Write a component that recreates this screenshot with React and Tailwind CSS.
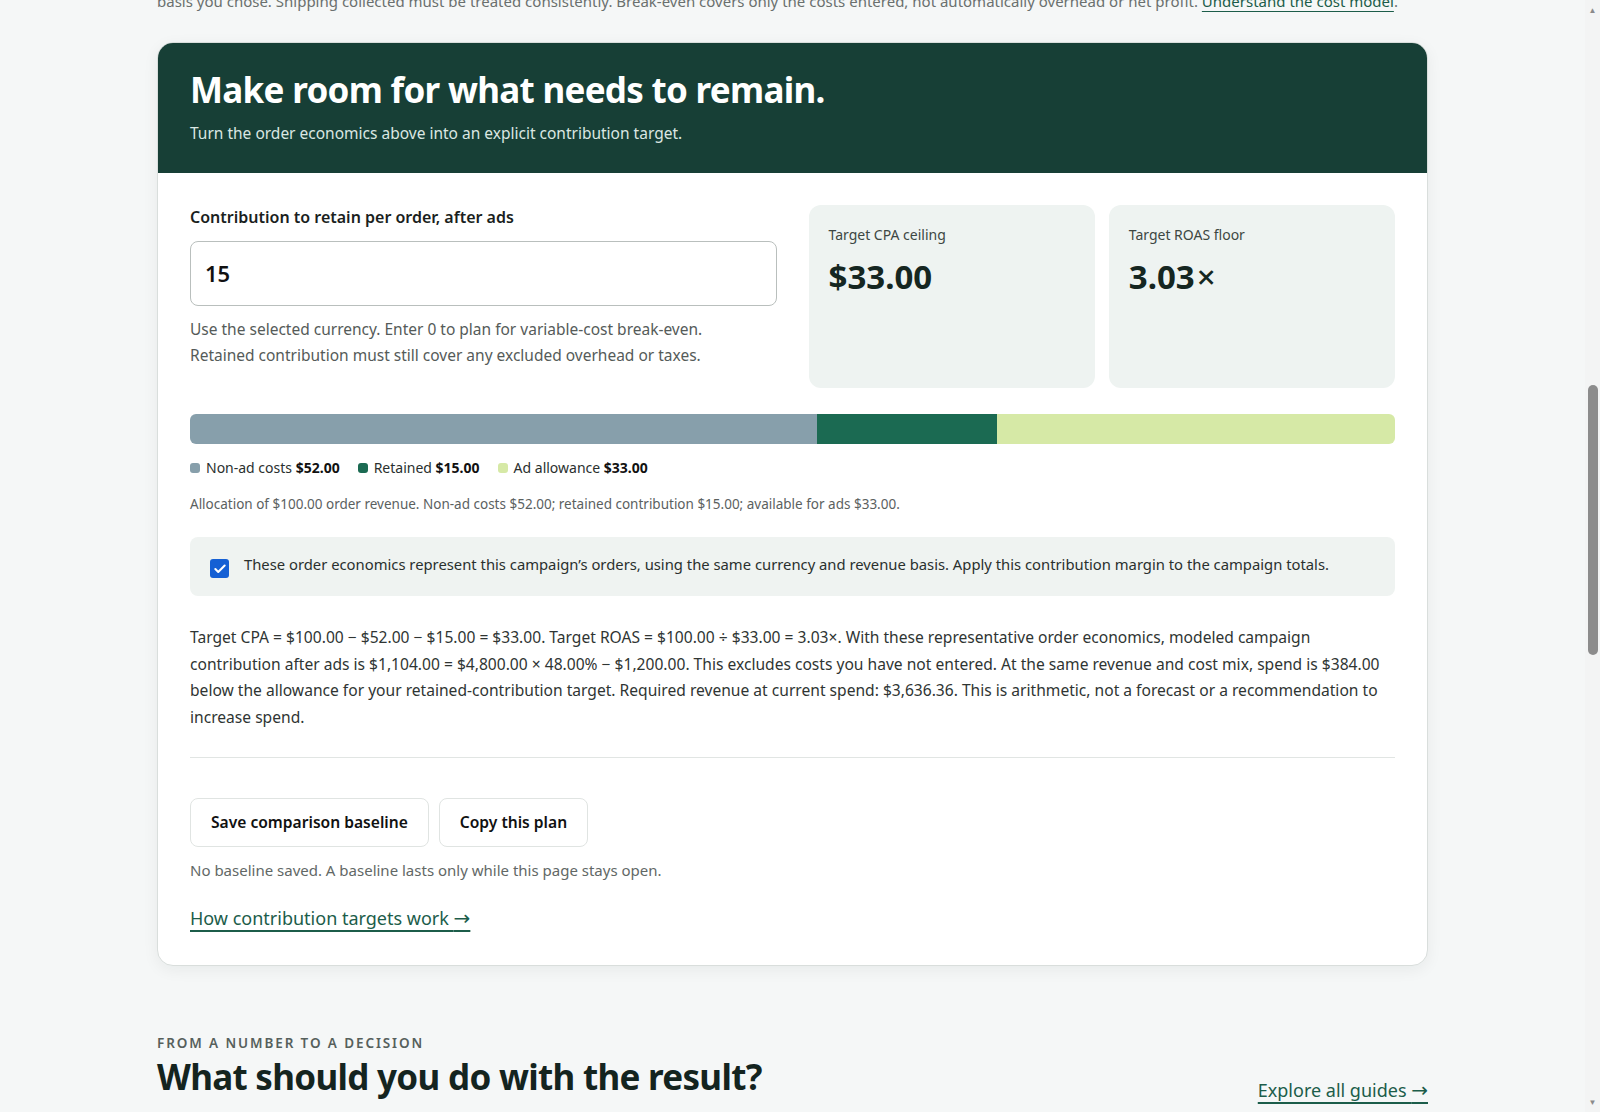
import React from 'react';
import { Check } from 'lucide-react';

const font = { fontFamily: '"Noto Sans", "Open Sans", sans-serif' };

const legend = [
  { label: 'Non-ad costs', value: '$52.00', color: 'bg-[#879fab]' },
  { label: 'Retained', value: '$15.00', color: 'bg-[#1b6a52]' },
  { label: 'Ad allowance', value: '$33.00', color: 'bg-[#d6e9a6]' },
];

const Arrow = () => <span className="font-['DejaVu_Sans'] text-[20px] leading-none">→</span>;

const MetricCard = ({ label, children }) => (
  <div className="bg-[#eef3f1] rounded-xl px-5 pt-5 h-[183px]">
    <div className="text-[14px] leading-5 text-[#3d4743]">{label}</div>
    <div className="mt-3 text-[33px] leading-10 font-bold text-[#152621]">{children}</div>
  </div>
);

const ContributionPlanner = () => (
  <div className="bg-white rounded-2xl border border-[#d9dedc] shadow-[0_4px_16px_rgba(20,40,35,0.06)] overflow-hidden">
    <div className="bg-[#173f36] px-8 pt-6 pb-7">
      <h2 className="text-[35px] leading-[46px] font-bold text-white tracking-[-0.02em]">Make room for what needs to remain.</h2>
      <p className="mt-2 text-[15.5px] leading-6 text-[#dbe7e2]">Turn the order economics above into an explicit contribution target.</p>
    </div>
    <div className="px-8 pt-8 pb-[33px]">
      <div className="grid grid-cols-2 gap-8">
        <div>
          <label className="block text-[16px] leading-6 font-semibold text-[#1b1f1e]">Contribution to retain per order, after ads</label>
          <div className="mt-3 h-[65px] border border-[#b9bfbd] rounded-lg flex items-center px-[14px]">
            <span className="text-[22px] font-semibold text-[#111]">15</span>
          </div>
          <p className="mt-[10px] text-[15.5px] leading-[26px] text-[#555b59]">
            Use the selected currency. Enter 0 to plan for variable-cost break-even.<br />
            Retained contribution must still cover any excluded overhead or taxes.
          </p>
        </div>
        <div className="grid grid-cols-2 gap-[14px]">
          <MetricCard label="Target CPA ceiling">$33.00</MetricCard>
          <MetricCard label="Target ROAS floor">3.03<span className="font-medium ml-0.5">×</span></MetricCard>
        </div>
      </div>

      <div className="mt-[26px] h-[30px] rounded-md overflow-hidden flex">
        <div className="bg-[#879fab] w-[52%]" />
        <div className="bg-[#1b6a52] w-[15%]" />
        <div className="bg-[#d6e9a6] w-[33%]" />
      </div>
      <div className="mt-[14px] flex items-center gap-[18px] text-[14px] leading-5 text-[#2a302e]">
        {legend.map((item) => (
          <span key={item.label} className="flex items-center gap-1.5">
            <span className={`w-[10px] h-[10px] rounded-[3px] ${item.color}`} />
            <span>{item.label} <b className="font-bold text-[#111]">{item.value}</b></span>
          </span>
        ))}
      </div>
      <p className="mt-4 text-[13.5px] leading-5 text-[#5b615f]">
        Allocation of $100.00 order revenue. Non-ad costs $52.00; retained contribution $15.00; available for ads $33.00.
      </p>

      <div className="mt-[23px] bg-[#eff3f1] rounded-lg flex items-start gap-[15px] pl-5 pr-5 pt-4 pb-[18px]">
        <span className="mt-1.5 w-[19px] h-[19px] shrink-0 rounded-[3px] bg-[#1560d4] flex items-center justify-center">
          <Check className="w-[14px] h-[14px] text-white" strokeWidth={3.5} />
        </span>
        <span className="text-[14.8px] leading-[22px] text-[#2a302e]">
          These order economics represent this campaign’s orders, using the same currency and revenue basis. Apply this contribution margin to the campaign totals.
        </span>
      </div>

      <p className="mt-7 text-[15.6px] leading-[26.5px] text-[#2f3533]">
        Target CPA = $100.00 − $52.00 − $15.00 = $33.00. Target ROAS = $100.00 ÷ $33.00 = 3.03×. With these representative order economics, modeled campaign contribution after ads is $1,104.00 = $4,800.00 × 48.00% − $1,200.00. This excludes costs you have not entered. At the same revenue and cost mix, spend is $384.00 below the allowance for your retained-contribution target. Required revenue at current spend: $3,636.36. This is arithmetic, not a forecast or a recommendation to increase spend.
      </p>

      <div className="mt-[27px] border-t border-[#e1e5e3]" />

      <div className="mt-10 flex gap-[10px]">
        <button className="h-[49px] px-5 rounded-lg border border-[#e0e4e2] bg-white text-[15.6px] font-semibold text-[#111]">Save comparison baseline</button>
        <button className="h-[49px] px-5 rounded-lg border border-[#e0e4e2] bg-white text-[15.6px] font-semibold text-[#111]">Copy this plan</button>
      </div>
      <p className="mt-3 text-[15px] leading-[22px] text-[#626866]">No baseline saved. A baseline lasts only while this page stays open.</p>
      <a href="#" className="mt-[23px] inline-block text-[18px] leading-7 text-[#1c5d4a] underline underline-offset-[5px] decoration-[1.5px]">How contribution targets work <Arrow /></a>
    </div>
  </div>
);

export default function App() {
  return (
    <div className="flex h-[1112px] overflow-hidden bg-[#f5f7f7]" style={font}>
      <div className="flex-1 overflow-hidden">
        <div className="w-[1271px] mx-auto">
          <p className="-mt-[11px] text-[15px] leading-6 text-[#6a706e] whitespace-nowrap">
            basis you chose. Shipping collected must be treated consistently. Break-even covers only the costs entered, not automatically overhead or net profit.{' '}
            <a href="#" className="text-[#1c5d4a] underline underline-offset-[4px]">Understand the cost model</a>.
          </p>
          <div className="mt-[29px]">
            <ContributionPlanner />
          </div>
          <div className="mt-[67px] flex items-end justify-between">
            <div>
              <div className="text-[13.5px] leading-5 font-semibold tracking-[0.14em] text-[#56605c]">FROM A NUMBER TO A DECISION</div>
              <h2 className="mt-0.5 text-[35px] leading-[44px] font-bold text-[#14241f] tracking-[-0.02em]">What should you do with the result?</h2>
            </div>
            <a href="#" className="mb-[-5px] text-[18px] leading-7 text-[#1c5d4a] underline underline-offset-[5px] decoration-[1.5px]">Explore all guides <Arrow /></a>
          </div>
        </div>
      </div>
      <div className="w-[15px] bg-[#f3f4f4] flex flex-col items-center">
        <span className="mt-1 text-[8px] leading-3 text-[#8a8a8a]">▲</span>
        <div className="mt-[369px] w-[10px] h-[270px] rounded-full bg-[#8c8c8c]" />
        <span className="mt-auto mb-1 text-[8px] leading-3 text-[#8a8a8a]">▼</span>
      </div>
    </div>
  );
}
